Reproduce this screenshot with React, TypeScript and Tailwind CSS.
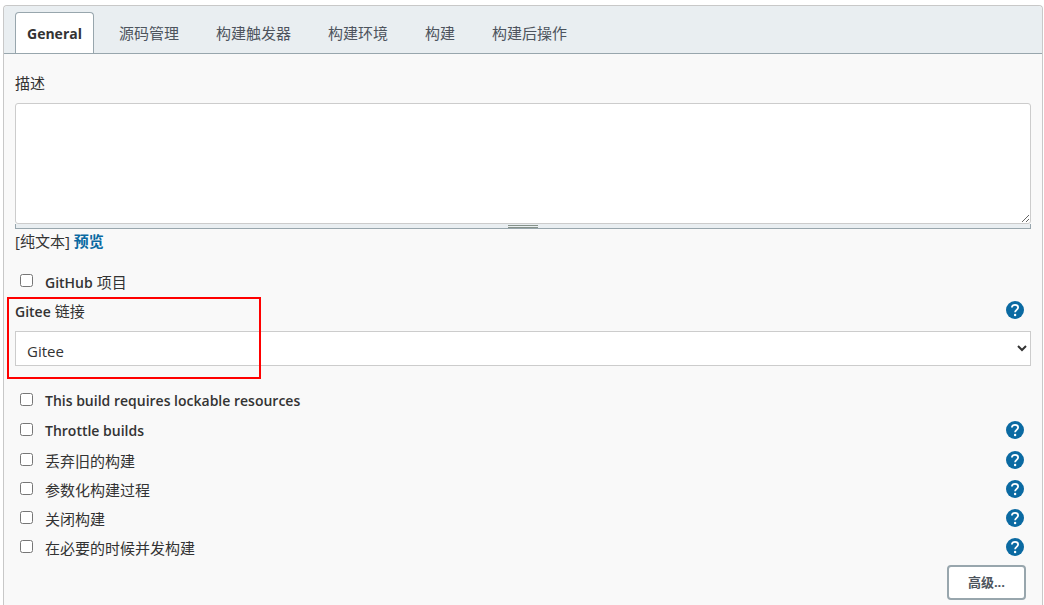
import { useState } from "react";

const TABS = ["General", "源码管理", "构建触发器", "构建环境", "构建", "构建后操作"];

const OPTIONS = [
  { id: "lockable", label: "This build requires lockable resources", help: false, latin: true },
  { id: "throttle", label: "Throttle builds", help: true, latin: true },
  { id: "discard", label: "丢弃旧的构建", help: true, latin: false },
  { id: "params", label: "参数化构建过程", help: true, latin: false },
  { id: "disable", label: "关闭构建", help: true, latin: false },
  { id: "concurrent", label: "在必要的时候并发构建", help: true, latin: false },
];

function HelpButton({ label }: { label: string }) {
  return (
    <button type="button" aria-label={`帮助: ${label}`} className="mr-[7px] shrink-0">
      <svg viewBox="0 0 18 18" className="block h-[18px] w-[18px]">
        <circle cx="9" cy="9" r="9" fill="#0b6aa2" />
        <path
          d="M5.9 6.6C5.9 4.8 7.3 3.8 9 3.8s3.1 1 3.1 2.7c0 2.3-3 2.4-3 4.8"
          fill="none"
          stroke="#fff"
          strokeWidth="1.8"
        />
        <circle cx="9.1" cy="14" r="1.2" fill="#fff" />
      </svg>
    </button>
  );
}

interface OptionRowProps {
  id: string;
  label: string;
  help: boolean;
  latin: boolean;
}

function OptionRow({ id, label, help, latin }: OptionRowProps) {
  return (
    <div className={`flex items-start justify-between ${latin ? "h-[30px]" : "h-[29px]"}`}>
      <div className="flex items-start">
        <input id={id} type="checkbox" className="mt-0.5 mr-3 ml-[5px] h-[13px] w-[13px]" />
        <label htmlFor={id} className={`leading-5 ${latin ? "text-[14px] font-semibold" : ""}`}>
          {label}
        </label>
      </div>
      {help && <HelpButton label={label} />}
    </div>
  );
}

export default function App() {
  const [activeTab, setActiveTab] = useState("General");
  const [description, setDescription] = useState("");

  return (
    <div className="flex min-h-screen bg-white pt-[5px] pr-px pl-[3px] font-['Open_Sans','Noto_Sans_CJK_SC',sans-serif] text-[15px] text-[#333]">
      <form className="flex-1 rounded-t border border-b-0 border-[#c8c8c8] bg-[#f9f9f9]">
        {/* Tabs */}
        <div className="flex h-12 items-end gap-[13px] rounded-t border-b border-[#98a6ad] bg-[#e9eef1] pl-[11px]">
          {TABS.map((tab) => (
            <button
              key={tab}
              type="button"
              onClick={() => setActiveTab(tab)}
              className={`h-[41px] rounded-t border border-b-0 px-[11px] ${
                tab === activeTab
                  ? "border-[#98a6ad] bg-white text-[14px] font-bold text-[#333]"
                  : "border-transparent text-[#4d545d]"
              }`}
            >
              {tab}
            </button>
          ))}
        </div>

        <div className="px-[11px] pt-[19px]">
          {/* Description */}
          <label htmlFor="description" className="block leading-5">
            描述
          </label>
          <textarea
            id="description"
            value={description}
            onChange={(e) => setDescription(e.target.value)}
            className="mt-[10px] block h-[121px] w-full rounded-[3px] border border-[#ccc] bg-white p-2"
          />
          <div className="flex h-[5px] flex-col items-center gap-px border border-t-0 border-[#98a6ad] bg-[#e9eef1] pt-px">
            <div className="h-px w-[30px] bg-[#86928a]" />
            <div className="h-px w-[30px] bg-[#86928a]" />
          </div>
          <div className="mt-0.5 leading-5">
            [纯文本]{" "}
            <a href="#preview" className="font-bold text-[#0b6aa2]">
              预览
            </a>
          </div>

          <div className="mt-[21px] flex h-7 items-start">
            <input id="github" type="checkbox" className="mt-0.5 mr-3 ml-[5px] h-[13px] w-[13px]" />
            <label htmlFor="github" className="leading-5">
              <span className="text-[14px] font-semibold">GitHub</span> 项目
            </label>
          </div>

          {/* Gitee connection */}
          <div className="relative pt-px">
            <div className="flex h-[30px] items-start justify-between">
              <label htmlFor="gitee" className="leading-5">
                <span className="text-[14px] font-semibold">Gitee</span> 链接
              </label>
              <HelpButton label="Gitee 链接" />
            </div>
            <select
              id="gitee"
              className="block h-[35px] w-full rounded-none border border-[#ccc] bg-white pt-1 pl-[7px]"
            >
              <option>Gitee</option>
            </select>
            <div className="pointer-events-none absolute -top-[3px] -left-2 h-[82px] w-[254px] border-2 border-[#f00]" />
          </div>

          <div className="mt-[25px]">
            {OPTIONS.map((option) => (
              <OptionRow key={option.id} {...option} />
            ))}
          </div>

          <div className="-mt-0.5 flex justify-end pr-[5px]">
            <button
              type="button"
              className="h-[35px] rounded border-2 border-[#98a6ad] bg-white px-[19px] text-[13px] font-bold text-[#4d545d]"
            >
              高级...
            </button>
          </div>
        </div>
      </form>
    </div>
  );
}
